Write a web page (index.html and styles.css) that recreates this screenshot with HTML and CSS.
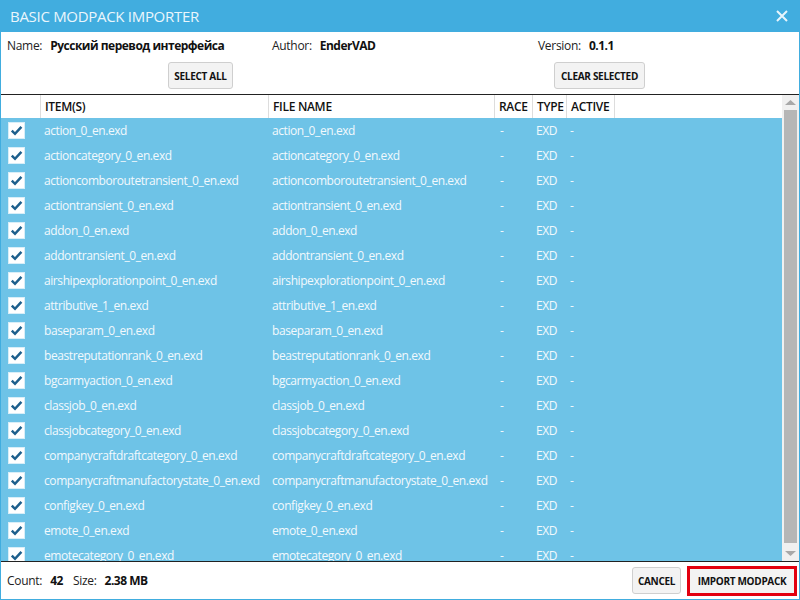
FILE: index.html
```html
<!DOCTYPE html>
<html>
<head>
<meta charset="utf-8">
<link rel="stylesheet" href="styles.css">
</head>
<body>
<div class="window">
  <div class="titlebar">
    <span class="title">BASIC MODPACK IMPORTER</span>
    <svg class="close" width="12" height="12" viewBox="0 0 12 12"><path d="M1 1L11 11M11 1L1 11" stroke="#e8f5fc" stroke-width="2"/></svg>
  </div>
  <div class="info">
    <div class="info-col c1"><span class="lbl">Name:</span><span class="val">Русский перевод интерфейса</span></div>
    <div class="info-col c2"><span class="lbl">Author:</span><span class="val">EnderVAD</span></div>
    <div class="info-col c3"><span class="lbl">Version:</span><span class="val">0.1.1</span></div>
  </div>
  <div class="actions">
    <button class="btn sel">SELECT ALL</button>
    <button class="btn clr">CLEAR SELECTED</button>
  </div>
  <div class="list">
    <div class="table">
      <div class="row head">
        <div class="cell chk"></div>
        <div class="cell">ITEM(S)</div>
        <div class="cell">FILE NAME</div>
        <div class="cell">RACE</div>
        <div class="cell">TYPE</div>
        <div class="cell">ACTIVE</div>
        <div class="cell last"></div>
      </div>
      <div class="rows" id="rows"></div>
    </div>
    <div class="scrollbar">
      <svg class="arrow" width="17" height="14" viewBox="0 0 17 14"><path d="M3 10L8.5 5L14 10Z" fill="#a8a8a8"/></svg>
      <div class="track"><div class="thumb"></div></div>
      <svg class="arrow" width="17" height="14" viewBox="0 0 17 14"><path d="M3 4L8.5 9L14 4Z" fill="#a8a8a8"/></svg>
    </div>
  </div>
  <div class="footer">
    <div class="stats"><span class="lbl">Count:</span><span class="val">42</span><span class="lbl">Size:</span><span class="val">2.38 MB</span></div>
    <div class="fbtns">
      <button class="btn cancel">CANCEL</button>
      <button class="btn import">IMPORT MODPACK</button>
    </div>
  </div>
</div>
<script src="script.js"></script>
</body>
</html>
```

FILE: script.js
```js
var items = ["action_0_en.exd","actioncategory_0_en.exd","actioncomboroutetransient_0_en.exd","actiontransient_0_en.exd","addon_0_en.exd","addontransient_0_en.exd","airshipexplorationpoint_0_en.exd","attributive_1_en.exd","baseparam_0_en.exd","beastreputationrank_0_en.exd","bgcarmyaction_0_en.exd","classjob_0_en.exd","classjobcategory_0_en.exd","companycraftdraftcategory_0_en.exd","companycraftmanufactorystate_0_en.exd","configkey_0_en.exd","emote_0_en.exd","emotecategory_0_en.exd"];
var html = "";
var check = '<svg width="17" height="17" viewBox="0 0 17 17"><rect x="0.5" y="0.5" width="16" height="16" fill="#fff" stroke="#d8eef8"/><path d="M3.8 8.6L7 11.8L13.4 4.8" fill="none" stroke="#1d5f8c" stroke-width="2.5"/></svg>';
items.forEach(function (n) {
  html += '<div class="row item"><div class="cell chk">' + check + '</div><div class="cell">' + n + '</div><div class="cell">' + n + '</div><div class="cell">-</div><div class="cell">EXD</div><div class="cell">-</div><div class="cell last"></div></div>';
});
document.getElementById("rows").innerHTML = html;
```

FILE: styles.css
```css
html, body { margin: 0; padding: 0; }
body { font-family: "Open Sans", "Noto Sans", sans-serif; color: #111; }
.window {
  width: 800px; height: 600px; box-sizing: border-box;
  border: 1px solid #41addf; border-top: none;
  display: flex; flex-direction: column; background: #fff; overflow: hidden;
}
.titlebar {
  height: 32px; flex: none; background: #41addf; margin: 0 -1px;
  display: flex; align-items: center; justify-content: space-between;
  padding: 0 12px 0 10px;
}
.title { color: #eaf6fc; font-size: 15px; letter-spacing: -0.3px; }
.info { height: 24px; display: flex; align-items: center; font-size: 12px; margin-top: 1px; }
.info-col { display: flex; }
.c1 { width: 265px; padding-left: 6px; }
.c2 { width: 266px; }
.lbl { color: #222; margin-right: 8px; letter-spacing: -0.3px; }
.val { font-weight: 700; color: #111; letter-spacing: -0.5px; }
.actions { height: 37px; display: flex; align-items: flex-start; padding-top: 5px; box-sizing: border-box; }
.btn {
  font-family: inherit; font-weight: 700; font-size: 10px; letter-spacing: -0.3px;
  background: #f3f3f3; border: 1px solid #cfcfcf; border-radius: 3px; color: #111;
  height: 27px; padding: 0; cursor: default;
}
.sel { width: 65px; margin-left: 167px; }
.clr { width: 91px; margin-left: 321px; }
.list { flex: 1; display: flex; border-top: 1px solid #222; border-bottom: 1px solid #222; min-height: 0; }
.table { flex: 1; display: flex; flex-direction: column; min-width: 0; }
.row {
  display: grid; grid-template-columns: 39px 228px 226px 38px 34px 48px 1fr;
}
.head { height: 23px; font-size: 12px; font-weight: 600; color: #111; background: #fff; flex: none; }
.head .cell { border-left: 1px solid #ddd; padding-left: 4px; display: flex; align-items: center; letter-spacing: -0.3px; }
.head .cell.chk { border-left: none; }
.head .cell.last { border-left: 1px solid #ddd; }
.rows { flex: 1; overflow: hidden; background: #6ec3e7; }
.item { height: 25px; color: #f2f9fd; font-size: 12px; background: #6ec3e7; }
.item .cell { display: flex; align-items: center; padding-left: 4px; letter-spacing: -0.42px; white-space: nowrap; overflow: hidden; }
.item .cell.chk { padding-left: 7px; }
.item .cell:nth-child(4) { padding-left: 6px; }
.item .cell:nth-child(5) { padding-left: 4px; }
.item .cell:nth-child(6) { padding-left: 4px; }
.scrollbar { width: 17px; flex: none; display: flex; flex-direction: column; background: #f0f0f0; }
.arrow { flex: none; display: block; }
.track { flex: 1; padding: 1px 2px 4px; }
.thumb { background: #b6b6b6; height: 100%; width: 13px; }
.footer { height: 37px; flex: none; display: flex; align-items: center; justify-content: space-between; padding-left: 6px; }
.stats { font-size: 12px; display: flex; margin-top: -1px; }
.stats .val { margin-right: 10px; }
.fbtns { display: flex; align-items: center; padding-right: 2px; }
.cancel { width: 49px; margin-right: 6px; }
.import { width: 110px; height: 30px; border: 3px solid #e3000f; border-radius: 0; }
```
